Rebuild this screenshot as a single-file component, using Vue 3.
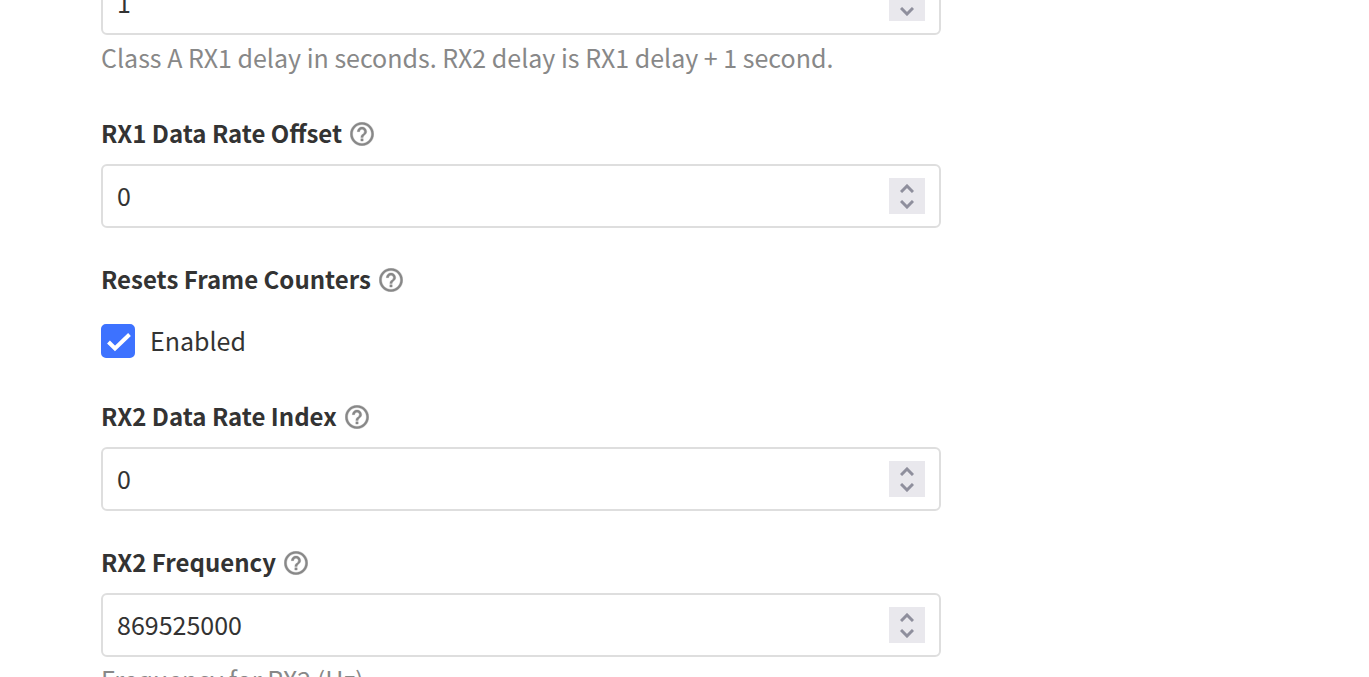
<script setup>
import { ref } from 'vue'

const fields = ref([
  { id: 'rx1-delay', label: 'RX1 Delay', type: 'number', value: 1, help: 'Class A RX1 delay in seconds. RX2 delay is RX1 delay + 1 second.' },
  { id: 'rx1-offset', label: 'RX1 Data Rate Offset', type: 'number', value: 0 },
  { id: 'reset-counters', label: 'Resets Frame Counters', type: 'checkbox', value: true },
  { id: 'rx2-index', label: 'RX2 Data Rate Index', type: 'number', value: 0 },
  { id: 'rx2-frequency', label: 'RX2 Frequency', type: 'number', value: 869525000, help: 'Frequency for RX2 (Hz)' },
])

const step = (field, delta) => {
  field.value = Math.max(0, Number(field.value) + delta)
}
</script>

<template>
  <main class="viewport">
    <form class="form" @submit.prevent>
      <div v-for="field in fields" :key="field.id" class="field">
        <div class="heading">
          <label class="title" :for="field.id">{{ field.label }}</label>
          <button class="hint" type="button" :aria-label="`About ${field.label}`">
            <svg class="hint-icon" viewBox="1.8 1.8 20.4 20.4" aria-hidden="true">
              <path d="M11 18h2v-2h-2v2zm1-16C6.48 2 2 6.48 2 12s4.48 10 10 10 10-4.48 10-10S17.52 2 12 2zm0 18c-4.41 0-8-3.59-8-8s3.59-8 8-8 8 3.59 8 8-3.59 8-8 8zm0-14c-2.21 0-4 1.79-4 4h2c0-1.1.9-2 2-2s2 .9 2 2c0 2-3 1.75-3 5h2c0-2.25 3-2.5 3-5 0-2.21-1.79-4-4-4z" />
            </svg>
          </button>
        </div>

        <div v-if="field.type === 'number'" class="number">
          <input :id="field.id" v-model="field.value" class="input" type="number" min="0" />
          <div class="spinner">
            <button class="step" type="button" aria-label="Increase" @click="step(field, 1)">
              <svg class="chevron" viewBox="0 0 14 9" aria-hidden="true">
                <path d="M1 8l6-6 6 6" />
              </svg>
            </button>
            <button class="step" type="button" aria-label="Decrease" @click="step(field, -1)">
              <svg class="chevron" viewBox="0 0 14 9" aria-hidden="true">
                <path d="M1 1l6 6 6-6" />
              </svg>
            </button>
          </div>
        </div>

        <label v-else class="check-row">
          <span class="check">
            <input :id="field.id" v-model="field.value" class="box" type="checkbox" />
            <svg v-if="field.value" class="tick" viewBox="0 0 34 34" aria-hidden="true">
              <path d="M7.5 18l6.5 6.5L28.5 10.5" />
            </svg>
          </span>
          <span class="check-text">Enabled</span>
        </label>

        <p v-if="field.help" class="help">{{ field.help }}</p>
      </div>
    </form>
  </main>
</template>

<style>
body {
  margin: 0;
  background: #fff;
}
</style>

<style scoped>
.viewport {
  height: 100vh;
  overflow: hidden;
  font-family: "Noto Sans CJK SC", "Noto Sans", sans-serif;
  font-size: 25px;
  line-height: 36px;
  color: #333;
}

.form {
  display: flex;
  flex-direction: column;
  gap: 34px;
  box-sizing: border-box;
  max-width: 941px;
  margin-top: -77px;
  padding-left: 101px;
}

.heading {
  display: flex;
  align-items: center;
  gap: 8px;
  height: 36px;
  margin-bottom: 12px;
}

.title {
  align-self: flex-start;
  font-size: 24px;
  line-height: 34px;
  font-weight: 700;
}

.hint {
  display: flex;
  padding: 0;
  border: 0;
  background: none;
}

.hint-icon {
  width: 24px;
  height: 24px;
  fill: #888;
  stroke: #888;
  stroke-width: 0.3;
}

.number {
  display: flex;
  align-items: center;
  box-sizing: border-box;
  height: 64px;
  padding: 0 14px;
  border: 2px solid #dedede;
  border-radius: 6px;
}

.input {
  flex: 1;
  min-width: 0;
  padding: 0 0 2px;
  border: 0;
  outline: 0;
  background: none;
  font: inherit;
  color: inherit;
  appearance: textfield;
}

.input::-webkit-inner-spin-button {
  appearance: none;
  margin: 0;
}

.spinner {
  display: flex;
  flex-direction: column;
  width: 36px;
  background: #e9e8ed;
}

.step {
  display: flex;
  align-items: center;
  justify-content: center;
  height: 18px;
  padding: 2px 0 0;
  border: 0;
  background: none;
}

.step:last-child {
  padding: 0 0 2px;
}

.chevron {
  width: 14px;
  height: 9px;
  fill: none;
  stroke: #8f8f9d;
  stroke-width: 3;
}

.check-row {
  display: flex;
  align-items: center;
  gap: 15px;
  box-sizing: border-box;
  height: 55px;
  padding-top: 6px;
}

.check {
  display: grid;
}

.check-text {
  padding-bottom: 2px;
}

.box,
.tick {
  grid-area: 1 / 1;
  width: 34px;
  height: 34px;
  margin: 0;
}

.box {
  appearance: none;
  border-radius: 5px;
  border: 2px solid #dedede;
}

.box:checked {
  border-color: #3d72ff;
  background: #3d72ff;
}

.tick {
  fill: none;
  stroke: #fff;
  stroke-width: 4;
  pointer-events: none;
}

.help {
  margin: 4px 0 7px;
  color: #888;
}
</style>
